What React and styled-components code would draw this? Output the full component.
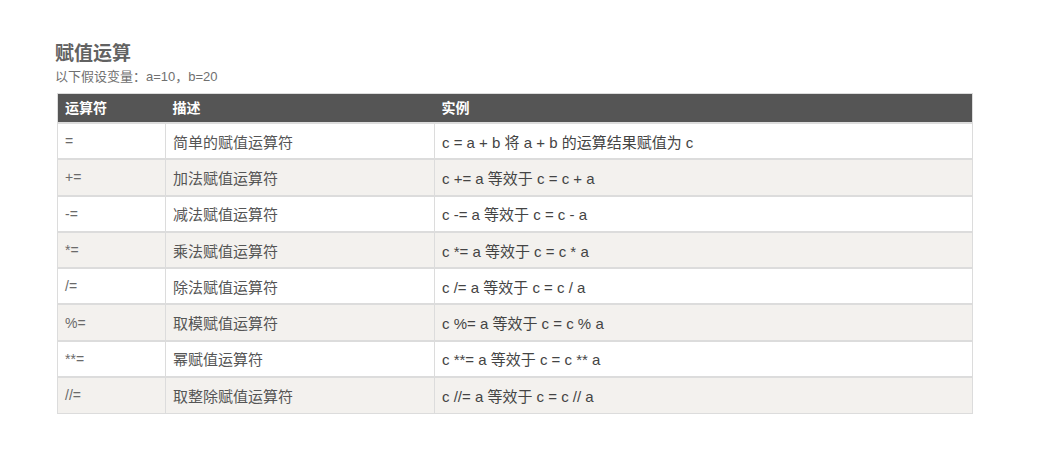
import React from "react";
import styled, { createGlobalStyle } from "styled-components";

const GlobalStyle = createGlobalStyle`
  body {
    margin: 0;
    background: #fff;
    font-family: "Liberation Sans", "Noto Sans CJK SC", sans-serif;
  }
`;

const rows = [
  ["=", "简单的赋值运算符", "c = a + b 将 a + b 的运算结果赋值为 c"],
  ["+=", "加法赋值运算符", "c += a 等效于 c = c + a"],
  ["-=", "减法赋值运算符", "c -= a 等效于 c = c - a"],
  ["*=", "乘法赋值运算符", "c *= a 等效于 c = c * a"],
  ["/=", "除法赋值运算符", "c /= a 等效于 c = c / a"],
  ["%=", "取模赋值运算符", "c %= a 等效于 c = c % a"],
  ["**=", "幂赋值运算符", "c **= a 等效于 c = c ** a"],
  ["//=", "取整除赋值运算符", "c //= a 等效于 c = c // a"],
];

const App = () => {
  return (
    <Page>
      <GlobalStyle />
      <Title>赋值运算</Title>
      <Note>以下假设变量：a=10，b=20</Note>
      <Table>
        <colgroup>
          <col style={{ width: 108 }} />
          <col style={{ width: 269 }} />
          <col />
        </colgroup>
        <thead>
          <tr>
            <Th>运算符</Th>
            <Th>描述</Th>
            <Th>实例</Th>
          </tr>
        </thead>
        <tbody>
          {rows.map((r, i) => (
            <Row key={i} $alt={i % 2 === 1}>
              <Td $op>{r[0]}</Td>
              <Td>{r[1]}</Td>
              <Td $dark>{r[2]}</Td>
            </Row>
          ))}
        </tbody>
      </Table>
    </Page>
  );
};

const Page = styled.div`
  padding: 42px 0 0 55px;
`;

const Title = styled.h2`
  margin: 0;
  font-size: 19px;
  font-weight: 700;
  color: #626262;
  line-height: 24px;
`;

const Note = styled.p`
  margin: 3px 0 8px 0;
  font-size: 13px;
  color: #707070;
  line-height: 16px;
`;

const Table = styled.table`
  margin-left: 2px;
  width: 916px;
  border-collapse: collapse;
  table-layout: fixed;
  border: 1px solid #dcdcdc;
`;

const Th = styled.th`
  background: #555;
  color: #fff;
  font-size: 14px;
  font-weight: 700;
  text-align: left;
  height: 28px;
  padding: 0 7px;
  line-height: 28px;
`;

const Row = styled.tr`
  background: ${(p) => (p.$alt ? "#f3f1ee" : "#fff")};
  height: 36.3px;
`;

const Td = styled.td`
  border: 1px solid #dcdcdc;
  border-top-width: 2px;
  padding: 0 7px;
  font-size: ${(p) => (p.$op ? "14px" : "15px")};
  color: ${(p) => (p.$op ? "#6a6a6a" : p.$dark ? "#444" : "#555")};
  white-space: nowrap;
`;

export default App;
